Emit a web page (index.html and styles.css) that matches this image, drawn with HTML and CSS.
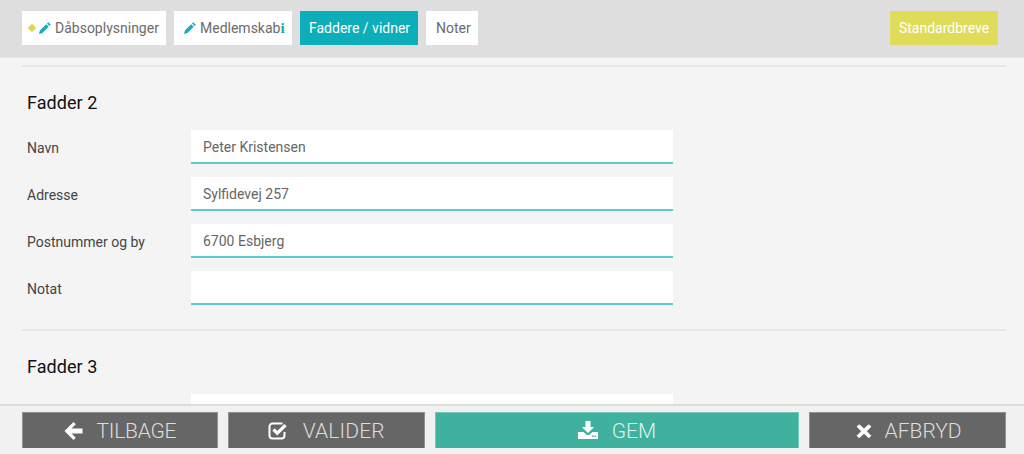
FILE: index.html
```html
<!DOCTYPE html>
<html lang="da">
<head>
<meta charset="utf-8">
<title>Faddere / vidner</title>
<link rel="stylesheet" href="styles.css">
</head>
<body>
<div class="app">
  <header class="topbar">
    <nav class="tabs">
      <a class="tab tab-first"><span class="diamond"></span><svg class="pencil" viewBox="0 0 12 12"><path d="M9.300.2 11.800 2.700 10.500 4 8 1.500zM7.200 2.300 9.700 4.800 3.400 11.100 0 12 .9 8.600z"/></svg>Dåbsoplysninger</a>
      <a class="tab tab-member"><svg class="pencil" viewBox="0 0 12 12"><path d="M9.300.2 11.800 2.700 10.500 4 8 1.500zM7.200 2.300 9.700 4.800 3.400 11.100 0 12 .9 8.600z"/></svg>Medlemskab<span class="info">i</span></a>
      <a class="tab tab-active">Faddere / vidner</a>
      <a class="tab tab-notes">Noter</a>
    </nav>
    <a class="letters">Standardbreve</a>
  </header>
  <main class="content">
    <hr class="rule">
    <section class="group">
      <h2 class="group-title">Fadder 2</h2>
      <div class="row"><label class="label">Navn</label><div class="input">Peter Kristensen</div></div>
      <div class="row"><label class="label">Adresse</label><div class="input">Sylfidevej 257</div></div>
      <div class="row"><label class="label">Postnummer og by</label><div class="input">6700 Esbjerg</div></div>
      <div class="row"><label class="label">Notat</label><div class="input"></div></div>
    </section>
    <hr class="rule">
    <section class="group">
      <h2 class="group-title">Fadder 3</h2>
      <div class="row"><label class="label"></label><div class="input"></div></div>
    </section>
  </main>
  <footer class="actions">
    <a class="btn btn-back"><svg class="btn-icon" viewBox="0 0 20 20"><path d="M9.500 1 11.800 3.300 7.500 7.500H18.500V12.500H7.500L11.800 16.700 9.500 19 .5 10z"/></svg>TILBAGE</a>
    <a class="btn btn-check"><svg class="btn-icon" viewBox="0 0 20 20"><path class="box" d="M16.500 11v3.500a3 3 0 0 1-3 3h-9a3 3 0 0 1-3-3v-9a3 3 0 0 1 3-3h10"/><path class="tick" d="M5.500 8.500 9.300 12.200 17.500 4.200"/></svg>VALIDER</a>
    <a class="btn btn-save"><svg class="btn-icon" viewBox="0 0 20 20"><path d="M7.500 0h5v6h3.500L10 12 4 6H7.500zM0 11h5.500L8 13.300a2.800 2.800 0 0 0 4 0L14.500 11H20v7H0z"/><path class="slot" d="M14 14.500h1.500V16H14zM16.500 14.500H18V16h-1.500z"/></svg>GEM</a>
    <a class="btn btn-cancel"><svg class="btn-icon" viewBox="0 0 20 20"><path d="M5.200 3.200 10 7.600 14.800 3.200 17.400 5.700 12.800 10.200 17.400 14.700 14.800 17.200 10 12.800 5.200 17.200 2.600 14.700 7.200 10.200 2.600 5.700z"/></svg>AFBRYD</a>
  </footer>
</div>
</body>
</html>
```
FILE: styles.css
```css
* { box-sizing: border-box; }
html, body { margin: 0; height: 100%; }
body { font-family: Roboto, "Liberation Sans", sans-serif; color: #555; background: #f4f4f4; }
.app { display: flex; flex-direction: column; height: 454px; width: 1024px; overflow: hidden; }

.topbar { flex: 0 0 58px; display: flex; justify-content: space-between; align-items: flex-start; padding: 11px 26px 0 22px; background: #dedede; border-bottom: 1px solid #e4e4e4; }
.tabs { display: flex; gap: 8px; }
.tab { display: flex; align-items: center; height: 34px; background: #fff; color: #6b6b6b; font-size: 14px; white-space: nowrap; }
.tab-first { width: 144px; padding-left: 6px; }
.tab-member { width: 118px; padding-left: 10px; }
.tab-active { width: 118px; padding-left: 9px; background: #0cafb9; color: #fff; }
.tab-notes { width: 52px; padding-left: 10px; }
.diamond { flex: none; width: 6px; height: 6px; margin: 0 4px 0 1px; background: #dcd84a; transform: rotate(45deg); }
.pencil { flex: none; width: 12px; height: 12px; margin-right: 4px; fill: #1aabbb; }
.info { color: #0cafb9; font-family: "Liberation Serif", serif; font-weight: bold; font-size: 15px; }
.letters { width: 108px; height: 34px; line-height: 34px; text-align: center; background: #dfdc5a; color: #fff; font-size: 14px; }

.content { flex: 1 1 auto; min-height: 0; overflow: hidden; padding: 7px 18px 0 22px; background: #f4f4f4; }
.rule { margin: 0; height: 2px; border: 0; background: #e8e8e8; }
.group { padding: 26px 0 11px 5px; }
.group-title { margin: 0 0 17px; font-size: 18px; line-height: 20px; font-weight: 400; color: #111; letter-spacing: .05px; }
.row { display: flex; align-items: center; height: 34px; margin-bottom: 13px; }
.label { flex: 0 0 164px; padding-top: 2px; font-size: 14px; color: #444; }
.input { flex: 0 0 482px; height: 34px; padding: 0 12px; line-height: 34px; background: #fff; border-bottom: 2px solid #5ccbd2; font-size: 14px; color: #666; }

.actions { flex: 0 0 50px; display: flex; gap: 10px; padding: 6px 18px 0 22px; background: #f1f1f1; border-top: 2px solid #ddd; }
.btn { display: flex; align-items: center; justify-content: center; height: 36px; padding-top: 1px; background: #666; color: #ddd; font-size: 21px; font-weight: 300; border: 1px solid rgba(255, 255, 255, .28); border-bottom: 0; }
.btn-back { width: 196px; letter-spacing: -.25px; }
.btn-check { width: 197px; letter-spacing: .15px; }
.btn-save { width: 365px; background: #3eb29e; color: #dff3ee; }
.btn-cancel { width: 197px; }
.btn-icon { flex: none; width: 20px; height: 20px; margin-right: 14px; fill: #fff; }
.btn-back .btn-icon { margin-right: 13px; }
.btn-check .btn-icon { margin-right: 15px; }
.btn-cancel .btn-icon { margin-right: 11px; }
.btn-icon .box { fill: none; stroke: #fff; stroke-width: 2; }
.btn-icon .tick { fill: none; stroke: #fff; stroke-width: 3.2; }
.btn-icon .slot { fill: #3eb29e; }
```
